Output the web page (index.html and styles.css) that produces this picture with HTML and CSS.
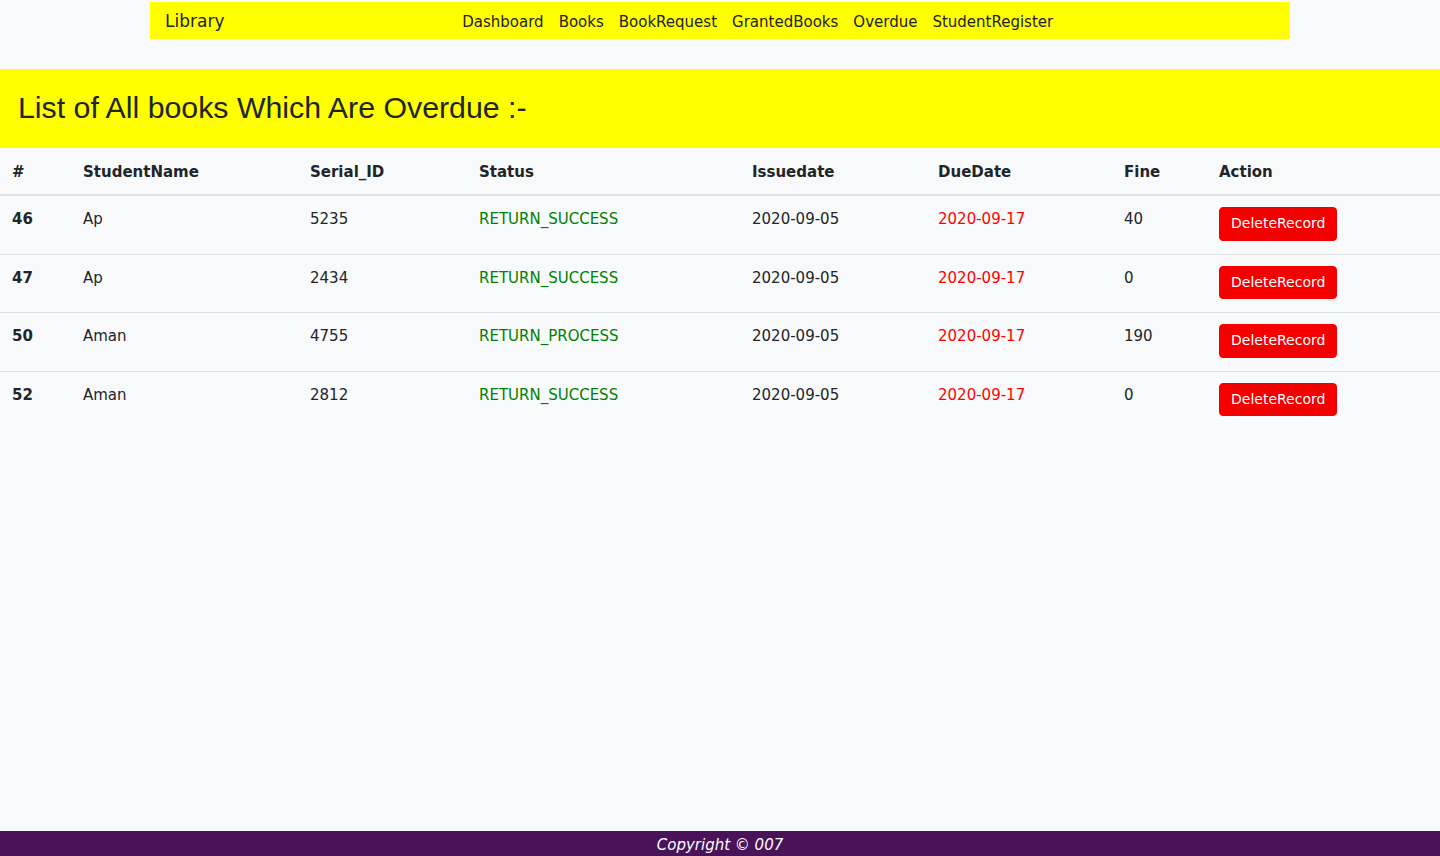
FILE: index.html
```html
<!DOCTYPE html>
<html lang="en">
<head>
<meta charset="utf-8">
<title>Library - Overdue</title>
<link rel="stylesheet" href="styles.css">
</head>
<body>
<div class="page">
  <nav class="navbar">
    <a class="brand" href="#">Library</a>
    <ul class="nav-links">
      <li><a href="#">Dashboard</a></li>
      <li><a href="#">Books</a></li>
      <li><a href="#">BookRequest</a></li>
      <li><a href="#">GrantedBooks</a></li>
      <li><a href="#">Overdue</a></li>
      <li><a href="#">StudentRegister</a></li>
    </ul>
  </nav>

  <div class="banner">
    <h1>List of All books Which Are Overdue :-</h1>
  </div>

  <table class="table">
    <colgroup>
      <col class="c-id"><col class="c-name"><col class="c-serial"><col class="c-status">
      <col class="c-issue"><col class="c-due"><col class="c-fine"><col class="c-action">
    </colgroup>
    <thead>
      <tr>
        <th>#</th><th>StudentName</th><th>Serial_ID</th><th>Status</th>
        <th>Issuedate</th><th>DueDate</th><th>Fine</th><th>Action</th>
      </tr>
    </thead>
    <tbody>
      <tr>
        <th>46</th><td>Ap</td><td>5235</td><td class="ok">RETURN_SUCCESS</td>
        <td>2020-09-05</td><td class="due">2020-09-17</td><td>40</td>
        <td><button class="btn-del">DeleteRecord</button></td>
      </tr>
      <tr>
        <th>47</th><td>Ap</td><td>2434</td><td class="ok">RETURN_SUCCESS</td>
        <td>2020-09-05</td><td class="due">2020-09-17</td><td>0</td>
        <td><button class="btn-del">DeleteRecord</button></td>
      </tr>
      <tr>
        <th>50</th><td>Aman</td><td>4755</td><td class="ok">RETURN_PROCESS</td>
        <td>2020-09-05</td><td class="due">2020-09-17</td><td>190</td>
        <td><button class="btn-del">DeleteRecord</button></td>
      </tr>
      <tr>
        <th>52</th><td>Aman</td><td>2812</td><td class="ok">RETURN_SUCCESS</td>
        <td>2020-09-05</td><td class="due">2020-09-17</td><td>0</td>
        <td><button class="btn-del">DeleteRecord</button></td>
      </tr>
    </tbody>
  </table>

  <footer class="footer">Copyright © 007</footer>
</div>
</body>
</html>
```

FILE: styles.css
```css
* { box-sizing: border-box; }
html, body { margin: 0; padding: 0; }
body {
  background: #f8f9fa;
  color: #212529;
  font-family: "DejaVu Sans", Verdana, sans-serif;
  font-size: 15px;
  line-height: 1.5;
}
.page {
  min-height: 856px;
  display: flex;
  flex-direction: column;
}
.navbar {
  width: 1140px;
  margin: 2px auto 0;
  height: 37px;
  background: #ffff00;
  display: flex;
  align-items: center;
  padding: 3px 15px 0;
}
.brand {
  font-size: 17px;
  color: #222;
  text-decoration: none;
  margin-right: 16px;
}
.nav-links {
  flex: 1;
  display: flex;
  justify-content: center;
  list-style: none;
  margin: 0;
  padding: 0;
}
.nav-links a {
  display: block;
  padding: 0 7.5px;
  color: #222;
  text-decoration: none;
  font-size: 15px;
}
.banner {
  margin-top: 30px;
  background: #ffff00;
  height: 78px;
  display: flex;
  align-items: center;
  padding: 0 18px;
}
.banner h1 {
  margin: 0;
  font-family: "Liberation Sans", Arial, sans-serif;
  font-weight: 400;
  font-size: 30.3px;
  line-height: 1.2;
  color: #212529;
}
.table {
  width: 100%;
  border-collapse: collapse;
  table-layout: fixed;
}
.c-id { width: 71px; }
.c-name { width: 227px; }
.c-serial { width: 169px; }
.c-status { width: 273px; }
.c-issue { width: 186px; }
.c-due { width: 186px; }
.c-fine { width: 95px; }
.c-action { width: 233px; }
.table th, .table td {
  padding: 12px;
  text-align: left;
  vertical-align: top;
  border-top: 1px solid #dee2e6;
  line-height: 22px;
}
.table thead th {
  padding-top: 13px;
  padding-bottom: 11px;
  border-bottom: 2px solid #dee2e6;
}
.table th { font-weight: 700; }
.ok { color: #008000; }
.due { color: #ff0000; }
.btn-del {
  font-family: "DejaVu Sans", Verdana, sans-serif;
  font-size: 14px;
  line-height: 19.5px;
  padding: 6px 11px;
  margin: -1px 0 1px;
  border: 1px solid #f50000;
  border-radius: 4px;
  background: #f50000;
  color: #fff;
  cursor: pointer;
  display: block;
}
.footer {
  margin-top: auto;
  height: 25px;
  background: #4a1258;
  color: #fff;
  font-style: italic;
  text-align: center;
  font-size: 15px;
  line-height: 28px;
}
```
